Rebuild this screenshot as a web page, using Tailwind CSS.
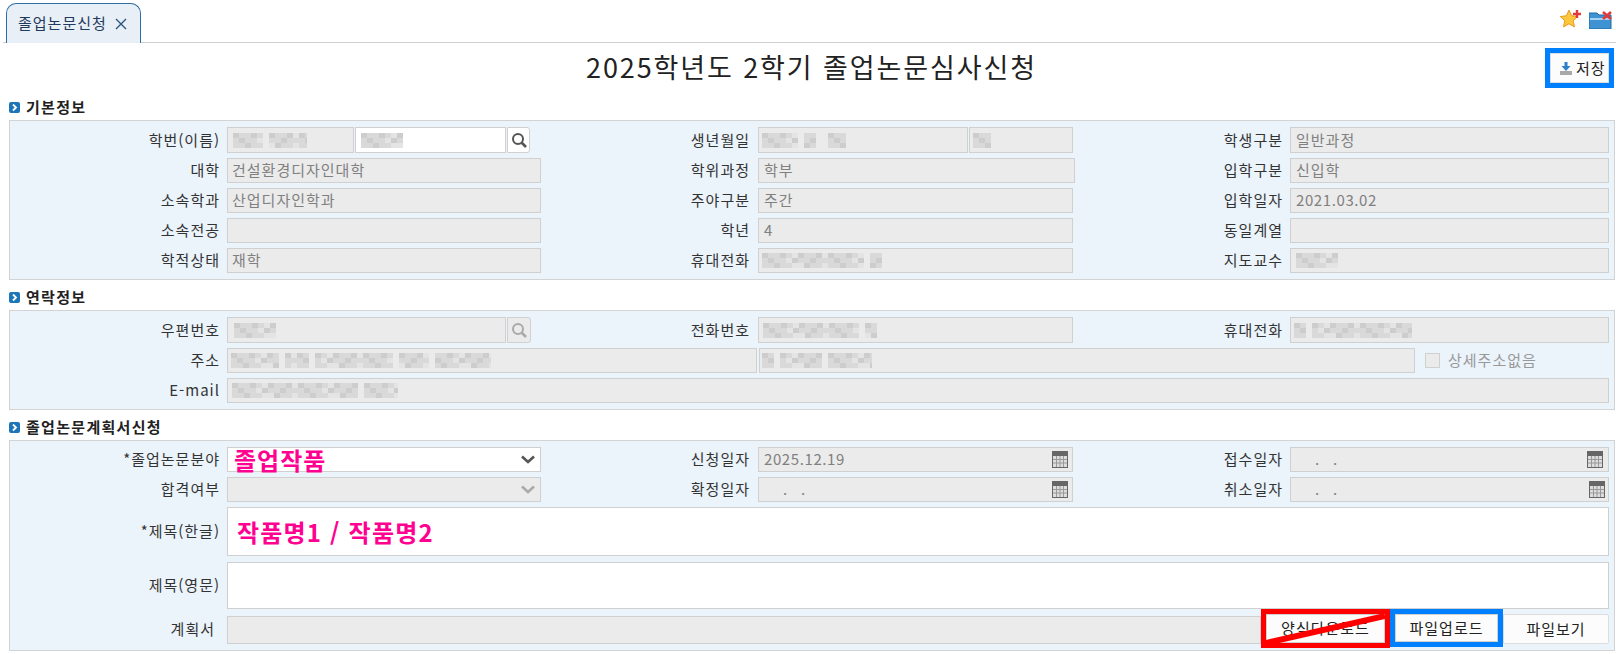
<!DOCTYPE html>
<html lang="ko">
<head>
  <meta charset="UTF-8" />
  <title>졸업논문신청</title>
  <script src="https://cdn.jsdelivr.net/npm/@tailwindcss/browser@4"></script>
</head>
<body class="h-[654px] overflow-hidden bg-white text-[15px] tracking-[1px] text-[#333] font-['Noto_Sans_CJK_KR',sans-serif]">

  <!-- mosaic tile for the redacted personal values -->
  <svg class="absolute h-0 w-0">
    <defs>
      <pattern id="mz" width="66" height="15" patternUnits="userSpaceOnUse">
        <path d="M0 0h6v5H0zM18 0h6v5h-6zM36 0h6v5h-6zM54 0h6v5h-6zM6 5h6v5H6zM30 5h6v5h-6zM48 5h6v5h-6zM12 10h6v5h-6zM42 10h6v5h-6z" fill="#cdcdcd"/>
        <path d="M6 0h12v5H6zM24 0h6v5h-6zM42 0h12v5H42zM0 5h6v5H0zM12 5h12v5H12zM36 5h12v5H36zM54 5h12v5H54zM0 10h12v5H0zM18 10h12v5H18zM48 10h12v5H48z" fill="#d9d9d9"/>
        <path d="M30 0h6v5h-6zM60 0h6v5h-6zM24 5h6v5h-6zM30 10h12v5H30zM60 10h6v5h-6z" fill="#e4e4e4"/>
      </pattern>
    </defs>
  </svg>

  <!-- tab bar -->
  <div class="ml-[3px] flex h-[43px] border-b border-[#d0d0d0] pl-[3px] pt-[3px]">
    <div class="flex h-[40px] w-[135px] items-center gap-[8px] rounded-t-[10px] border border-b-0 border-[#2f6ea5] bg-[#e8eff6] pl-[11px] text-[#1f3a5c]">
      <span>졸업논문신청</span>
      <svg width="12" height="12" viewBox="0 0 12 12" class="stroke-[#2a5680]"><path d="M1 1l10 10M11 1L1 11" stroke-width="1.4" fill="none"/></svg>
    </div>
    <div class="ml-auto mr-[3px] flex items-start gap-[7px] pt-[6px]">
      <svg width="22" height="20" viewBox="0 0 22 20">
        <path d="M9 1l2.6 5.8 6.2.7-4.6 4.2 1.3 6.2L9 14.8l-5.5 3.1 1.3-6.2L.2 7.5l6.2-.7z" fill="#fcc63d" stroke="#e89a1c"/>
        <path d="M17 1v8M13 5h8" stroke="#e23a3a" stroke-width="2.4"/>
      </svg>
      <svg width="24" height="18" viewBox="0 0 24 18" class="mt-[2px]">
        <path d="M0 2h8l2 2h12v14H0z" fill="#3f93d2" stroke="#1f6ca8"/>
        <path d="M1 8h20" stroke="#a6d3f2" stroke-width="2"/>
        <path d="M14 1l8 7M22 1l-8 7" stroke="#e23a3a" stroke-width="2.6"/>
      </svg>
    </div>
  </div>

  <!-- title -->
  <div class="grid h-[47px] grid-cols-[1fr_auto_1fr]">
    <div></div>
    <h1 class="pl-[7px] pt-[5px] text-[27px] leading-[38px] tracking-[1.9px] text-[#222]">2025학년도 2학기 졸업논문심사신청</h1>
    <div class="flex justify-end pr-[2px] pt-[5px]">
      <div class="h-[40px] w-[69px] border-[5px] border-[#0080ff]">
        <button class="flex h-full w-full items-center gap-[4px] border border-[#ddd] bg-[#fcfcfc] pl-[9px] text-[#222]">
          <svg width="12" height="13" viewBox="0 0 12 13">
            <path d="M0 9h12v4H0z" fill="#a9a9a9"/>
            <path d="M4.5 0h3v4h3L6 9 1.500 4h3z" fill="#2b80c9"/>
          </svg>
          <span>저장</span>
        </button>
      </div>
    </div>
  </div>

  <!-- 기본정보 -->
  <div class="flex h-[30px] items-center gap-[6px] pl-[9px] pt-[4px] font-bold tracking-[1.3px] text-[#222]">
    <svg width="11" height="11" viewBox="0 0 11 11"><rect width="11" height="11" rx="2" fill="#1c76b8"/><path d="M4 2.5l3 3-3 3" stroke="#fff" stroke-width="1.8" fill="none"/></svg>
    <span>기본정보</span>
  </div>
  <div class="ml-[9px] w-[1606px] border border-[#d3d3d3] bg-[#ebf3fb] py-[6px]">
    <div class="grid grid-cols-[217px_314px_217px_315px_217px_319px] gap-y-[5px]">
      <div class="flex h-[26px] items-center justify-end pr-[7px]">학번(이름)</div>
      <div class="flex -mr-[11px] h-[26px]">
        <div class="flex w-[127px] items-center border border-[#d0d0d0] bg-[#ebebeb] pl-[5px]"><svg width="74" height="15"><rect width="30" height="15" fill="url(#mz)"/><rect x="36" width="38" height="15" fill="url(#mz)"/></svg></div>
        <div class="ml-px flex w-[151px] items-center border border-[#d0d0d0] bg-white pl-[5px]"><svg width="42" height="15"><rect width="42" height="15" fill="url(#mz)"/></svg></div>
        <button class="ml-px flex w-[23px] items-center justify-center rounded-r-[3px] border border-[#d0d0d0] bg-white">
          <svg width="16" height="16" viewBox="0 0 16 16" fill="none" stroke="#555"><circle cx="7" cy="7" r="5" stroke-width="2"/><path d="M10.5 10.5L15 15" stroke-width="2.6"/></svg>
        </button>
      </div>
      <div class="flex items-center justify-end pr-[8px]">생년월일</div>
      <div class="flex h-[26px]">
        <div class="flex w-[210px] items-center border border-[#d0d0d0] bg-[#ebebeb] pl-[3px]"><svg width="84" height="15"><rect width="36" height="15" fill="url(#mz)"/><rect x="42" width="12" height="15" fill="url(#mz)"/><rect x="66" width="18" height="15" fill="url(#mz)"/></svg></div>
        <div class="ml-px flex flex-1 items-center border border-[#d0d0d0] bg-[#ebebeb] pl-[3px]"><svg width="18" height="15"><rect width="18" height="15" fill="url(#mz)"/></svg></div>
      </div>
      <div class="flex items-center justify-end pr-[7px]">학생구분</div>
      <div class="flex h-[26px] items-center border border-[#d0d0d0] bg-[#ebebeb] pl-[5px] text-[#808080]">일반과정</div>

      <div class="flex h-[25px] items-center justify-end pr-[7px]">대학</div>
      <div class="flex items-center border border-[#d0d0d0] bg-[#ebebeb] pl-[4px] text-[#808080]">건설환경디자인대학</div>
      <div class="flex items-center justify-end pr-[8px]">학위과정</div>
      <div class="-mr-[2px] flex items-center border border-[#d0d0d0] bg-[#ebebeb] pl-[5px] text-[#808080]">학부</div>
      <div class="flex items-center justify-end pr-[7px]">입학구분</div>
      <div class="flex items-center border border-[#d0d0d0] bg-[#ebebeb] pl-[5px] text-[#808080]">신입학</div>

      <div class="flex h-[25px] items-center justify-end pr-[7px]">소속학과</div>
      <div class="flex items-center border border-[#d0d0d0] bg-[#ebebeb] pl-[4px] text-[#808080]">산업디자인학과</div>
      <div class="flex items-center justify-end pr-[8px]">주야구분</div>
      <div class="flex items-center border border-[#d0d0d0] bg-[#ebebeb] pl-[5px] text-[#808080]">주간</div>
      <div class="flex items-center justify-end pr-[7px]">입학일자</div>
      <div class="flex items-center border border-[#d0d0d0] bg-[#ebebeb] pl-[5px] tracking-[0.6px] text-[#808080]">2021.03.02</div>

      <div class="flex h-[25px] items-center justify-end pr-[7px]">소속전공</div>
      <div class="border border-[#d0d0d0] bg-[#ebebeb]"></div>
      <div class="flex items-center justify-end pr-[8px]">학년</div>
      <div class="flex items-center border border-[#d0d0d0] bg-[#ebebeb] pl-[5px] text-[#808080]">4</div>
      <div class="flex items-center justify-end pr-[7px]">동일계열</div>
      <div class="border border-[#d0d0d0] bg-[#ebebeb]"></div>

      <div class="flex h-[25px] items-center justify-end pr-[7px]">학적상태</div>
      <div class="flex items-center border border-[#d0d0d0] bg-[#ebebeb] pl-[4px] text-[#808080]">재학</div>
      <div class="flex items-center justify-end pr-[8px]">휴대전화</div>
      <div class="flex items-center border border-[#d0d0d0] bg-[#ebebeb] pl-[3px]"><svg width="120" height="15"><rect width="102" height="15" fill="url(#mz)"/><rect x="108" width="12" height="15" fill="url(#mz)"/></svg></div>
      <div class="flex items-center justify-end pr-[7px]">지도교수</div>
      <div class="flex items-center border border-[#d0d0d0] bg-[#ebebeb] pl-[5px]"><svg width="42" height="15"><rect width="42" height="15" fill="url(#mz)"/></svg></div>
    </div>
  </div>

  <!-- 연락정보 -->
  <div class="flex h-[30px] items-center gap-[6px] pl-[9px] pt-[4px] font-bold tracking-[1.3px] text-[#222]">
    <svg width="11" height="11" viewBox="0 0 11 11"><rect width="11" height="11" rx="2" fill="#1c76b8"/><path d="M4 2.5l3 3-3 3" stroke="#fff" stroke-width="1.8" fill="none"/></svg>
    <span>연락정보</span>
  </div>
  <div class="ml-[9px] w-[1606px] border border-[#d3d3d3] bg-[#ebf3fb] py-[6px]">
    <div class="grid grid-cols-[217px_314px_217px_315px_217px_319px] gap-y-[5px]">
      <div class="flex h-[26px] items-center justify-end pr-[7px]">우편번호</div>
      <div class="-mr-[11px] flex">
        <div class="flex w-[279px] items-center border border-[#d0d0d0] bg-[#ebebeb] pl-[6px]"><svg width="42" height="15"><rect width="42" height="15" fill="url(#mz)"/></svg></div>
        <button class="ml-px flex w-[24px] items-center justify-center rounded-r-[3px] border border-[#d0d0d0] bg-[#ebebeb]">
          <svg width="16" height="16" viewBox="0 0 16 16" fill="none" stroke="#aaa"><circle cx="7" cy="7" r="5" stroke-width="2"/><path d="M10.5 10.5L15 15" stroke-width="2.6"/></svg>
        </button>
      </div>
      <div class="flex items-center justify-end pr-[8px]">전화번호</div>
      <div class="flex items-center border border-[#d0d0d0] bg-[#ebebeb] pl-[4px]"><svg width="114" height="15"><rect width="96" height="15" fill="url(#mz)"/><rect x="102" width="12" height="15" fill="url(#mz)"/></svg></div>
      <div class="flex items-center justify-end pr-[7px]">휴대전화</div>
      <div class="flex items-center border border-[#d0d0d0] bg-[#ebebeb] pl-[3px]"><svg width="118" height="15"><rect width="12" height="15" fill="url(#mz)"/><rect x="18" width="100" height="15" fill="url(#mz)"/></svg></div>

      <div class="flex h-[25px] items-center justify-end pr-[7px]">주소</div>
      <div class="col-span-5 flex">
        <div class="flex w-[530px] items-center border border-[#d0d0d0] bg-[#ebebeb] pl-[3px]"><svg width="260" height="15"><rect width="48" height="15" fill="url(#mz)"/><rect x="54" width="24" height="15" fill="url(#mz)"/><rect x="84" width="78" height="15" fill="url(#mz)"/><rect x="168" width="30" height="15" fill="url(#mz)"/><rect x="204" width="56" height="15" fill="url(#mz)"/></svg></div>
        <div class="ml-[2px] flex w-[656px] items-center border border-[#d0d0d0] bg-[#ebebeb] pl-[2px]"><svg width="110" height="15"><rect width="12" height="15" fill="url(#mz)"/><rect x="18" width="42" height="15" fill="url(#mz)"/><rect x="66" width="44" height="15" fill="url(#mz)"/></svg></div>
        <label class="ml-[10px] flex items-center gap-[8px] text-[#999]">
          <span class="h-[15px] w-[15px] border border-[#d0d0d0] bg-[#ebebeb]"></span>
          <span>상세주소없음</span>
        </label>
      </div>

      <div class="flex h-[25px] items-center justify-end pr-[7px]">E-mail</div>
      <div class="col-span-5 flex items-center border border-[#d0d0d0] bg-[#ebebeb] pl-[4px]"><svg width="166" height="15"><rect width="126" height="15" fill="url(#mz)"/><rect x="132" width="34" height="15" fill="url(#mz)"/></svg></div>
    </div>
  </div>

  <!-- 졸업논문계획서신청 -->
  <div class="flex h-[30px] items-center gap-[6px] pl-[9px] pt-[4px] font-bold tracking-[1.3px] text-[#222]">
    <svg width="11" height="11" viewBox="0 0 11 11"><rect width="11" height="11" rx="2" fill="#1c76b8"/><path d="M4 2.5l3 3-3 3" stroke="#fff" stroke-width="1.8" fill="none"/></svg>
    <span>졸업논문계획서신청</span>
  </div>
  <div class="ml-[9px] w-[1606px] border border-[#d3d3d3] bg-[#ebf3fb] py-[6px]">
    <div class="grid grid-cols-[217px_314px_217px_315px_217px_319px] gap-y-[5px]">
      <div class="flex h-[25px] items-center justify-end pr-[7px]">*졸업논문분야</div>
      <div class="flex items-center justify-between border border-[#d0d0d0] bg-white pl-[6px] pr-[5px]">
        <span class="text-[24px] font-bold leading-[23px] tracking-[1px] text-[#ff0090]">졸업작품</span>
        <svg width="14" height="9" viewBox="0 0 14 9" fill="none" stroke="#555" stroke-width="2.6"><path d="M1 1.5l6 5.5 6-5.5"/></svg>
      </div>
      <div class="flex items-center justify-end pr-[8px]">신청일자</div>
      <div class="flex items-center justify-between border border-[#d0d0d0] bg-[#ebebeb] pl-[5px] pr-[4px] text-[#808080]">
        <span class="tracking-[0.6px]">2025.12.19</span>
        <svg width="16" height="17" viewBox="0 0 16 17"><rect width="16" height="17" fill="#666"/><rect x="1" y="5" width="14" height="11" fill="#ddd"/><path d="M4.5 5v11M8 5v11M11.5 5v11M1 8.5h14M1 12h14" stroke="#999"/></svg>
      </div>
      <div class="flex items-center justify-end pr-[7px]">접수일자</div>
      <div class="flex items-center justify-between border border-[#d0d0d0] bg-[#ebebeb] pl-[24px] pr-[5px] text-[#808080]">
        <span class="tracking-[1.8px]">.&nbsp;&nbsp;.</span>
        <svg width="16" height="17" viewBox="0 0 16 17"><rect width="16" height="17" fill="#666"/><rect x="1" y="5" width="14" height="11" fill="#ddd"/><path d="M4.5 5v11M8 5v11M11.5 5v11M1 8.5h14M1 12h14" stroke="#999"/></svg>
      </div>

      <div class="flex h-[25px] items-center justify-end pr-[7px]">합격여부</div>
      <div class="flex items-center justify-end border border-[#d0d0d0] bg-[#ebebeb] pr-[5px]">
        <svg width="14" height="9" viewBox="0 0 14 9" fill="none" stroke="#aaa" stroke-width="2.6"><path d="M1 1.5l6 5.5 6-5.5"/></svg>
      </div>
      <div class="flex items-center justify-end pr-[8px]">확정일자</div>
      <div class="flex items-center justify-between border border-[#d0d0d0] bg-[#ebebeb] pl-[24px] pr-[4px] text-[#808080]">
        <span class="tracking-[1.8px]">.&nbsp;&nbsp;.</span>
        <svg width="16" height="17" viewBox="0 0 16 17"><rect width="16" height="17" fill="#666"/><rect x="1" y="5" width="14" height="11" fill="#ddd"/><path d="M4.5 5v11M8 5v11M11.5 5v11M1 8.5h14M1 12h14" stroke="#999"/></svg>
      </div>
      <div class="flex items-center justify-end pr-[7px]">취소일자</div>
      <div class="flex items-center justify-between border border-[#d0d0d0] bg-[#ebebeb] pl-[24px] pr-[3px] text-[#808080]">
        <span class="tracking-[1.8px]">.&nbsp;&nbsp;.</span>
        <svg width="16" height="17" viewBox="0 0 16 17"><rect width="16" height="17" fill="#666"/><rect x="1" y="5" width="14" height="11" fill="#ddd"/><path d="M4.5 5v11M8 5v11M11.5 5v11M1 8.5h14M1 12h14" stroke="#999"/></svg>
      </div>

      <div class="flex h-[49px] items-center justify-end pr-[7px]">*제목(한글)</div>
      <div class="col-span-5 flex items-center border border-[#d0d0d0] bg-white pl-[9px]">
        <span class="text-[24px] font-bold tracking-[1.2px] text-[#ff0090]">작품명1 / 작품명2</span>
      </div>

      <div class="mt-px flex h-[47px] items-center justify-end pr-[7px]">제목(영문)</div>
      <div class="col-span-5 mt-px border border-[#d0d0d0] bg-white"></div>

      <div class="flex h-[30px] items-center justify-end pr-[12px]">계획서</div>
      <div class="col-span-5 flex">
        <div class="mt-[2px] w-[1034px] border border-[#d0d0d0] bg-[#ebebeb]"></div>
        <div class="relative -mt-[5px] -mb-[4px] h-[39px] w-[129px] border-[5px] border-[#ff0000]">
          <button class="h-full w-full border border-[#d0d0d0] bg-[#fcfcfc] text-[#222]">양식다운로드</button>
          <svg class="absolute inset-0" width="119" height="29" viewBox="0 0 119 29"><path d="M0 29L119 2" stroke="#ff0000" stroke-width="6"/></svg>
        </div>
        <div class="-mt-[5px] -mb-[4px] h-[38px] w-[113px] border-[5px] border-[#0080ff]">
          <button class="h-full w-full border border-[#d0d0d0] bg-[#fcfcfc] text-[#222]">파일업로드</button>
        </div>
        <button class="w-[106px] rounded-r-[2px] border border-[#ddd] bg-[#fcfcfc] text-[#222]">파일보기</button>
      </div>
    </div>
  </div>

</body>
</html>
